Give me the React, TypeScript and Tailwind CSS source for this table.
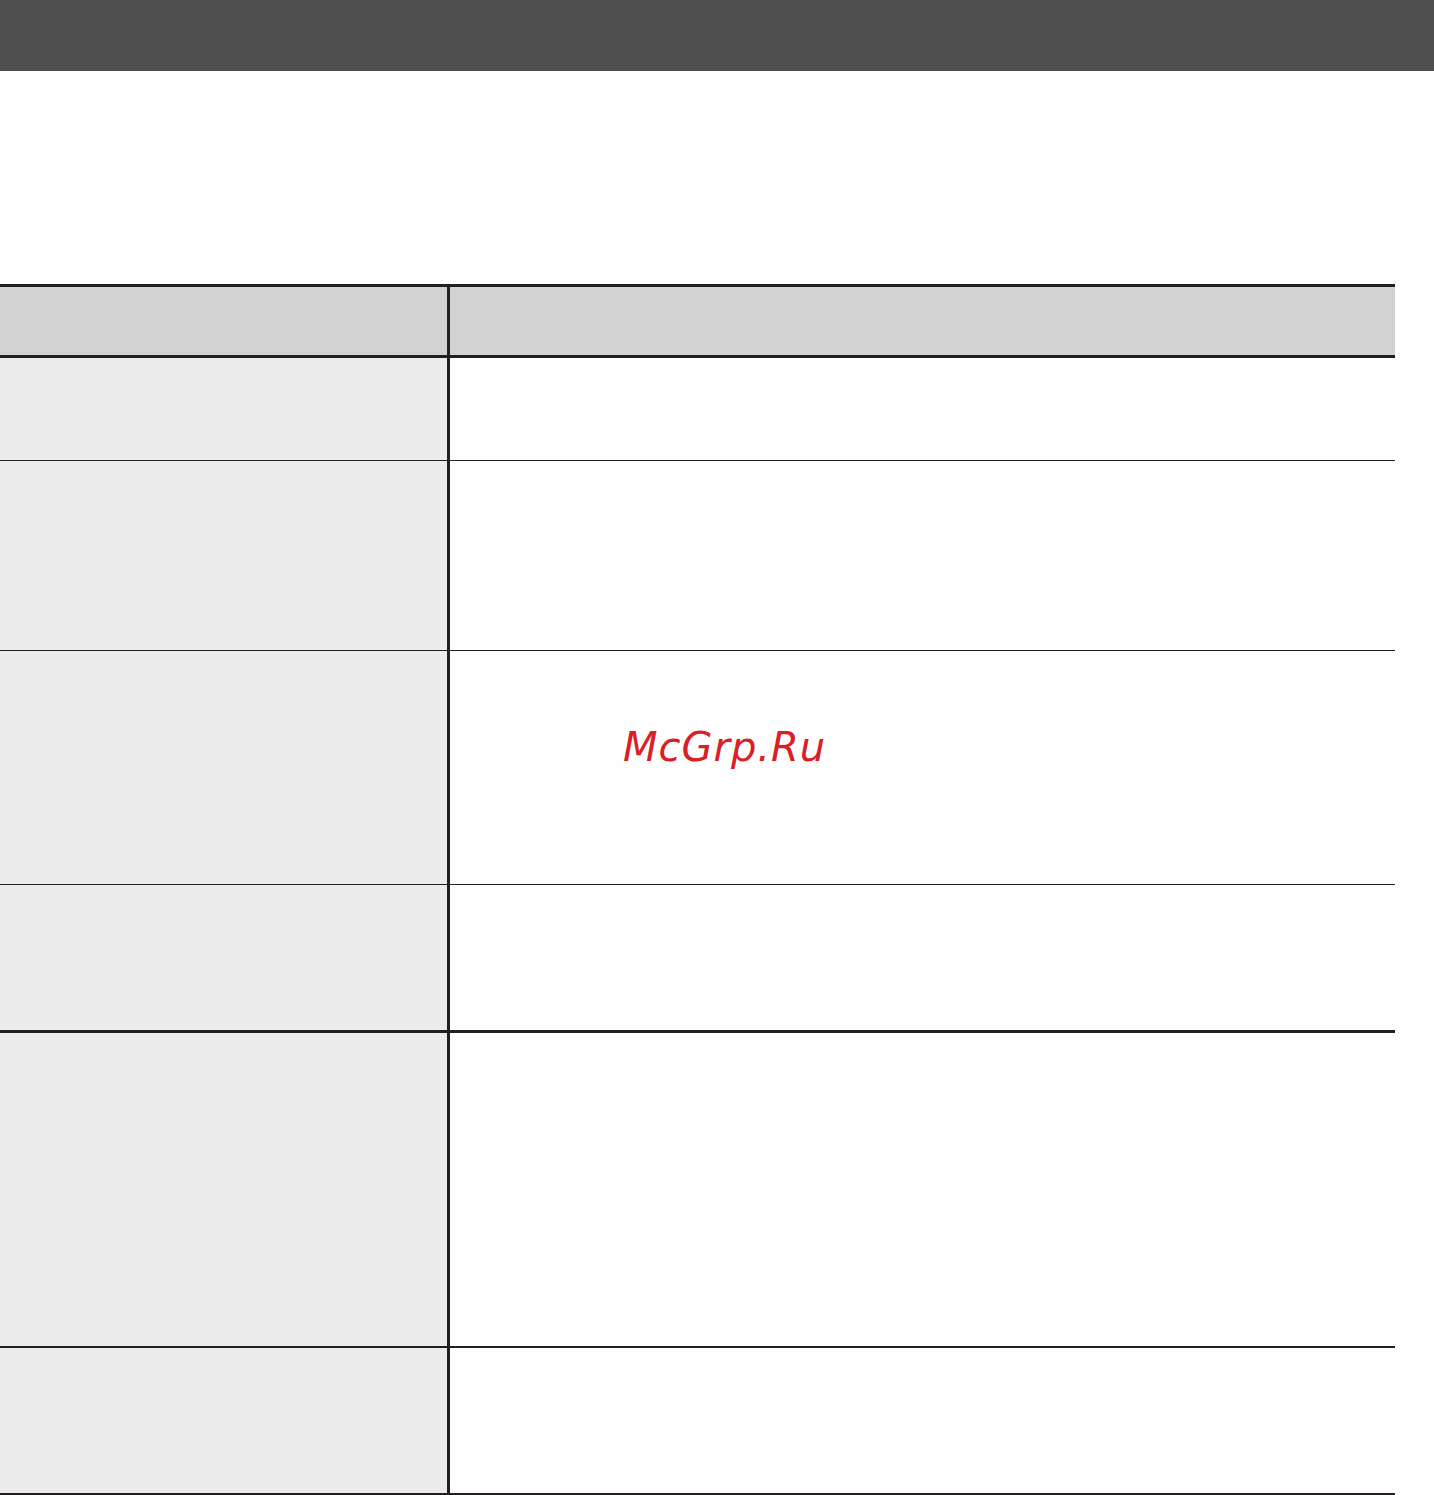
import React from "react";

const rows: { h: number; b: string }[] = [
  { h: 103, b: "border-b" },
  { h: 190, b: "border-b" },
  { h: 234, b: "border-b" },
  { h: 148, b: "border-b-[3px]" },
  { h: 315, b: "border-b-2" },
  { h: 147, b: "border-b-2" },
];

export default function App() {
  return (
    <div className="relative w-[1434px] h-[1495px] bg-white overflow-hidden" style={{ fontFamily: '"DejaVu Sans", sans-serif' }}>
      <div className="h-[71px] w-full bg-[#504f50]" />
      <div className="h-[213px]" />
      <div className="w-[1395px] border-t-[3px] border-[#231f20]">
        <div className="flex h-[71px] border-b-[3px] border-[#231f20] bg-[#d2d2d2]">
          <div className="w-[450px] shrink-0 border-r-[3px] border-[#231f20]" />
          <div className="flex-1" />
        </div>
        {rows.map((r, i) => (
          <div key={i} className={`flex border-[#231f20] ${r.b}`} style={{ height: r.h }}>
            <div className="w-[450px] shrink-0 bg-[#ececec] border-r-[3px] border-[#231f20]" />
            <div className="flex-1 bg-white" />
          </div>
        ))}
      </div>
      <div className="absolute left-[623px] top-[727px] text-[40px] italic leading-none text-[#d92026] tracking-[1px]" style={{ fontFamily: '"DejaVu Sans", sans-serif' }}>
        McGrp.Ru
      </div>
    </div>
  );
}
